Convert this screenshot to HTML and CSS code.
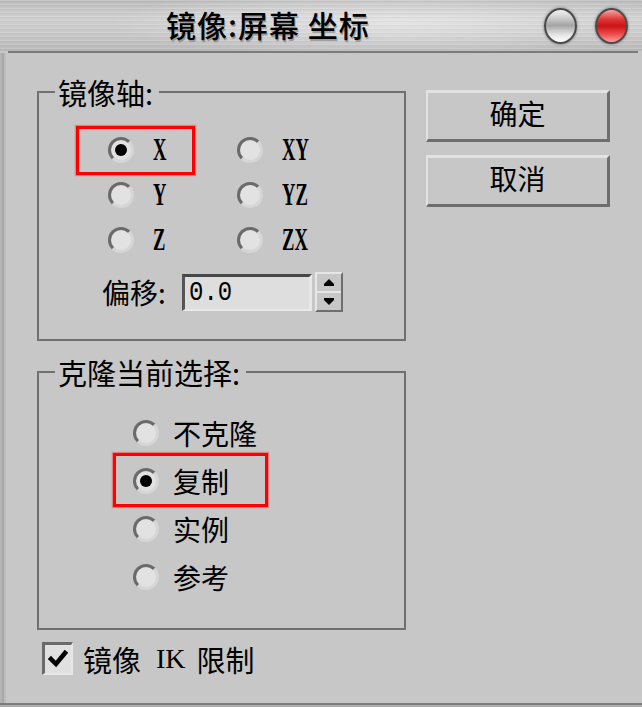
FILE: index.html
```html
<!DOCTYPE html>
<html lang="zh">
<head>
<meta charset="utf-8">
<title>镜像: 屏幕 坐标</title>
<link rel="stylesheet" href="styles.css">
</head>
<body>
<div class="window">
  <div class="titlebar">
    <div class="title">镜像:屏幕 坐标</div>
    <div class="lights">
      <span class="light light-white"></span>
      <span class="light light-red"></span>
    </div>
  </div>
  <div class="sep"></div>
  <div class="frame">
    <div class="strip"></div>
    <div class="body">
      <div class="left">
        <fieldset class="group group-axis">
          <legend>镜像轴:</legend>
          <div class="axes">
            <div class="opt opt-axis marked marked-axis"><span class="radio on"></span><span class="lat">X</span></div>
            <div class="opt opt-axis"><span class="radio"></span><span class="lat">XY</span></div>
            <div class="opt opt-axis"><span class="radio"></span><span class="lat">Y</span></div>
            <div class="opt opt-axis"><span class="radio"></span><span class="lat">YZ</span></div>
            <div class="opt opt-axis"><span class="radio"></span><span class="lat">Z</span></div>
            <div class="opt opt-axis"><span class="radio"></span><span class="lat">ZX</span></div>
          </div>
          <div class="offset">
            <span class="offset-label">偏移:</span>
            <div class="input"><span class="num">0.0</span></div>
            <div class="spin">
              <div class="half">
                <svg width="10" height="7" viewBox="0 0 10 7"><polygon points="5,0 10,5 0,5" fill="#000"/><rect x="0" y="5" width="10" height="2" fill="#000"/></svg>
              </div>
              <div class="half half-down">
                <svg width="10" height="7" viewBox="0 0 10 7"><rect x="0" y="0" width="10" height="2" fill="#000"/><polygon points="0,2 10,2 5,7" fill="#000"/></svg>
              </div>
            </div>
          </div>
        </fieldset>
        <fieldset class="group group-clone">
          <legend>克隆当前选择:</legend>
          <div class="clones">
            <div class="opt opt-clone"><span class="radio"></span><span>不克隆</span></div>
            <div class="opt opt-clone marked marked-clone"><span class="radio on"></span><span>复制</span></div>
            <div class="opt opt-clone"><span class="radio"></span><span>实例</span></div>
            <div class="opt opt-clone"><span class="radio"></span><span>参考</span></div>
          </div>
        </fieldset>
        <div class="check">
          <span class="box">
            <svg width="20" height="20" viewBox="0 0 20 20"><polyline points="3,10 8,15 17,4" fill="none" stroke="#000" stroke-width="4.5" stroke-linejoin="miter" stroke-linecap="square"/></svg>
          </span>
          <span class="check-label"><span>镜像</span><span class="ik">IK</span><span>限制</span></span>
        </div>
      </div>
      <div class="right">
        <button class="btn">确定</button>
        <button class="btn">取消</button>
      </div>
    </div>
  </div>
  <div class="bottom-edge"></div>
</div>
</body>
</html>
```
FILE: styles.css
```css
html, body {
  margin: 0;
  padding: 0;
}
body {
  width: 642px;
  height: 707px;
  overflow: hidden;
  font-family: "Noto Sans CJK SC", "Liberation Sans", sans-serif;
  color: #000;
  background: #c7c7c7;
}
.window {
  height: 707px;
  display: flex;
  flex-direction: column;
  background: #c7c7c7;
}
.titlebar {
  height: 51px;
  flex: none;
  display: flex;
  align-items: center;
  padding: 0 14px 0 166px;
  box-sizing: border-box;
  background:
    repeating-linear-gradient(180deg, rgba(255,255,255,0.16) 0 1px, rgba(0,0,0,0.035) 1px 2px, transparent 2px 4px),
    radial-gradient(ellipse 45% 70% at 62% 45%, rgba(255,255,255,0.45), rgba(255,255,255,0) 100%),
    linear-gradient(180deg, #bcbcbc 0%, #cfcfcf 35%, #c9c9c9 65%, #b9b9b9 100%);
}
.title {
  font-size: 30px;
  line-height: 32px;
  letter-spacing: 1px;
  margin-top: -3px;
  white-space: pre;
  font-weight: 500;
  text-shadow: 1px 2px 0 rgba(90,90,90,0.45);
}
.lights {
  margin-left: auto;
  display: flex;
  gap: 18px;
  margin-top: 1px;
}
.light {
  width: 33px;
  height: 36px;
  border-radius: 50%;
  box-sizing: border-box;
  border: 2px solid #4a4a4a;
  box-shadow: 0 0 3px rgba(0,0,0,0.45);
}
.light-white {
  background: linear-gradient(180deg, #f2f2f2 0%, #cdcdcd 25%, #a4a4a4 48%, #e6e6e6 78%, #ffffff 100%);
}
.light-red {
  background: linear-gradient(180deg, #f6a3a3 0%, #e23a3a 28%, #c91414 50%, #ef4e4e 76%, #ff9d9d 100%);
}
.sep {
  height: 2px;
  flex: none;
  margin: 0 4px 0 8px;
  background: #7b7b7b;
}
.frame {
  flex: 1;
  display: flex;
  border-bottom: 2px solid #7d7d7d;
}
.strip {
  width: 6px;
  flex: none;
  background: linear-gradient(90deg, #b4b4b4 0 2px, #a9a9a9 2px 4px, #bcbcbc 4px 6px);
}
.body {
  flex: 1;
  display: flex;
  gap: 20px;
  padding: 24px 0 0 31px;
}
.left {
  width: 369px;
  flex: none;
}
.group {
  margin: 0;
  padding: 0;
  min-width: 0;
  border: 2px solid #707070;
}
.group legend {
  margin-left: 16px;
  padding: 0 6px 0 3px;
  font-size: 29px;
  line-height: 30px;
}
.group-axis {
  padding: 20px 0 27px 0;
}
.group-clone {
  margin-top: 16px;
  padding: 22px 0 27px 0;
}
.axes {
  display: grid;
  grid-template-columns: 129px auto;
  grid-auto-rows: 45px;
  margin-left: 69px;
}
.clones {
  display: grid;
  grid-auto-rows: 48px;
  margin-left: 94px;
}
.opt {
  display: flex;
  align-items: center;
  position: relative;
}
.opt-axis {
  gap: 19px;
}
.opt-clone {
  gap: 14px;
  font-size: 28px;
  line-height: 30px;
}
.marked::before {
  content: "";
  position: absolute;
  border: 3px solid #f00;
  box-shadow: 0 0 1px 1px rgba(255,60,60,0.5);
  box-sizing: border-box;
}
.marked-axis::before {
  left: -32px;
  top: -1px;
  width: 119px;
  height: 49px;
}
.marked-clone::before {
  left: -20px;
  top: -4px;
  width: 155px;
  height: 54px;
}
.radio {
  width: 26px;
  height: 26px;
  flex: none;
  box-sizing: border-box;
  border-radius: 50%;
  border: 3px solid;
  border-color: #6a6a6a #d6d6d6 #d6d6d6 #6a6a6a;
  background: #e2e2e2;
  display: flex;
  align-items: center;
  justify-content: center;
}
.radio.on::after {
  content: "";
  width: 12px;
  height: 12px;
  border-radius: 50%;
  background: #000;
}
.lat {
  font-family: "Liberation Serif", "DejaVu Serif", serif;
  font-size: 31px;
  font-weight: bold;
  line-height: 32px;
  display: inline-block;
  transform: scaleX(0.6);
  transform-origin: 0 50%;
}
.offset {
  display: flex;
  align-items: center;
  height: 40px;
  margin: 10px 0 0 63px;
}
.offset-label {
  width: 70px;
  font-size: 28px;
  line-height: 30px;
}
.input {
  width: 130px;
  height: 37px;
  margin-left: 10px;
  box-sizing: border-box;
  border-style: solid;
  border-width: 3px 3px 2px 3px;
  border-color: #474747 #e8e8e8 #e8e8e8 #555555;
  background: #dedede;
  padding-left: 4px;
  display: flex;
  align-items: center;
}
.num {
  font-family: "Liberation Mono", "DejaVu Sans Mono", monospace;
  font-size: 24px;
  line-height: 24px;
  display: inline-block;
  transform: scaleY(1.15);
}
.spin {
  width: 28px;
  height: 40px;
  margin-left: 3px;
  box-sizing: border-box;
  display: flex;
  flex-direction: column;
  border: 2px solid;
  border-color: #e6e6e6 #6e6e6e #6e6e6e #e6e6e6;
  background: #c7c7c7;
}
.half {
  flex: 1;
  display: flex;
  align-items: center;
  justify-content: center;
}
.half-down {
  border-top: 2px solid #e6e6e6;
}
.check {
  display: flex;
  align-items: center;
  gap: 10px;
  margin: 12px 0 0 5px;
}
.box {
  width: 31px;
  height: 33px;
  box-sizing: border-box;
  border-style: solid;
  border-width: 3px 2px 2px 3px;
  border-color: #6a6a6a #e8e8e8 #e8e8e8 #6a6a6a;
  background: #e0e0e0;
  display: flex;
  align-items: center;
  justify-content: center;
}
.check-label {
  display: flex;
  align-items: center;
  font-size: 29px;
  line-height: 30px;
}
.ik {
  font-family: "Liberation Serif", "DejaVu Serif", serif;
  font-size: 28px;
  margin: 0 11px 0 15px;
}
.right {
  display: flex;
  flex-direction: column;
  gap: 13px;
  padding-top: 13px;
}
.btn {
  width: 184px;
  height: 52px;
  box-sizing: border-box;
  border-style: solid;
  border-width: 3px 3px 3px 2px;
  border-color: #e2e2e2 #6e6e6e #6e6e6e #e2e2e2;
  background: #c7c7c7;
  font-family: "Noto Sans CJK SC", sans-serif;
  font-size: 28px;
  line-height: 30px;
  color: #000;
  padding: 0 0 6px 0;
  display: flex;
  align-items: center;
  justify-content: center;
}
.bottom-edge {
  height: 2px;
  flex: none;
  background: #adadad;
}
```
